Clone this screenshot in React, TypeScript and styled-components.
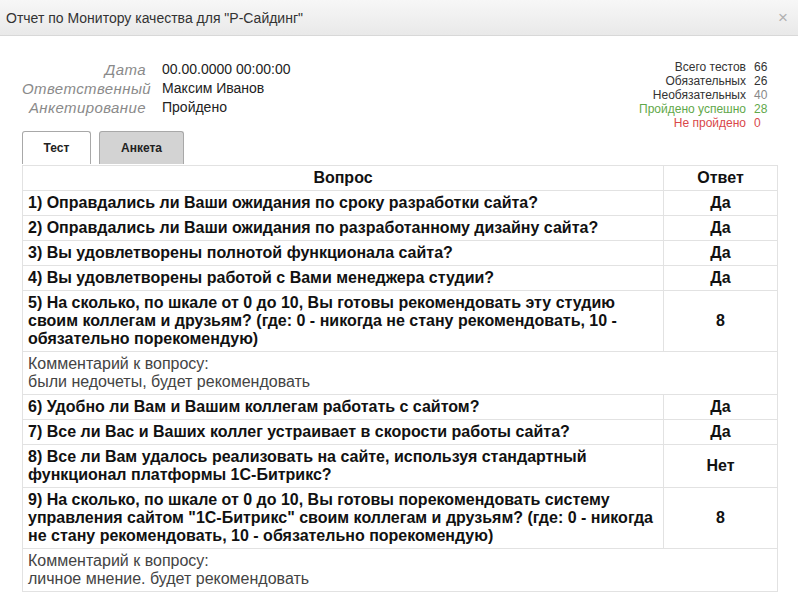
import styled, { createGlobalStyle } from 'styled-components';

const GlobalStyle = createGlobalStyle`
  html, body {
    margin: 0;
    padding: 0;
    background: #fff;
  }
  body {
    font-family: Arial, "Liberation Sans", sans-serif;
    color: #222;
  }
`;

const Window = styled.div`
  width: 798px;
  min-height: 614px;
  background: #fff;
`;

const TitleBar = styled.div`
  height: 35px;
  display: flex;
  align-items: center;
  justify-content: space-between;
  padding: 0 10px 0 6px;
  background: linear-gradient(#f7f7f7, #e9e9e9);
  border-bottom: 1px solid #d8d8d8;
`;

const Title = styled.span`
  font-size: 14px;
  color: #333;
`;

const Close = styled.span`
  font-size: 17px;
  color: #b0b0b0;
  line-height: 1;
`;

const Body = styled.div`
  padding: 24px 20px 20px 22px;
`;

const Summary = styled.div`
  display: flex;
  justify-content: space-between;
  align-items: flex-start;
  margin-bottom: 1px;
`;

const Info = styled.div`
  display: grid;
  grid-template-columns: 124px auto;
  column-gap: 16px;
  line-height: 19px;
`;

const InfoLabel = styled.span`
  text-align: right;
  font-size: 15px;
  letter-spacing: 0.4px;
  font-style: italic;
  color: #8a8a8a;
`;

const InfoValue = styled.span`
  font-size: 14px;
  color: #222;
`;

const Stats = styled.div`
  display: grid;
  grid-template-columns: auto 24px;
  column-gap: 8px;
  font-size: 12px;
  line-height: 14px;
`;

type Tone = 'plain' | 'muted' | 'ok' | 'fail';

const toneColor: Record<Tone, string> = {
  plain: '#333',
  muted: '#888',
  ok: '#5fa84a',
  fail: '#d9474a',
};

const StatLabel = styled.span<{ $tone: Tone }>`
  text-align: right;
  color: ${(p) => (p.$tone === 'muted' ? '#333' : toneColor[p.$tone])};
`;

const StatValue = styled.span<{ $tone: Tone }>`
  color: ${(p) => toneColor[p.$tone]};
`;

const Tabs = styled.div`
  display: flex;
  gap: 8px;
  height: 33px;
  margin-bottom: 1px;
`;

const Tab = styled.div<{ $active?: boolean }>`
  box-sizing: border-box;
  height: 33px;
  width: ${(p) => (p.$active ? '69px' : '85px')};
  display: flex;
  align-items: center;
  justify-content: center;
  font-size: 12px;
  font-weight: bold;
  color: #222;
  border: 1px solid #a8a8a8;
  border-bottom: none;
  border-radius: 3px 3px 0 0;
  background: ${(p) => (p.$active ? '#fff' : '#d3d3d3')};
`;

const Table = styled.table`
  width: 756px;
  border-collapse: collapse;
  font-size: 16px;
  line-height: 18px;
  border: 1px solid #e2e2e2;
`;

const Th = styled.th`
  padding: 3px 5px;
  border: 1px solid #e2e2e2;
  font-weight: bold;
  text-align: center;
  color: #111;
`;

const Question = styled.td`
  padding: 3px 5px;
  border: 1px solid #e2e2e2;
  font-weight: bold;
  color: #111;
  vertical-align: middle;
`;

const Answer = styled.td`
  width: 103px;
  padding: 3px 5px;
  border: 1px solid #e2e2e2;
  font-weight: bold;
  text-align: center;
  vertical-align: middle;
  color: #111;
`;

const Comment = styled.td`
  padding: 3px 5px;
  border: 1px solid #e2e2e2;
  color: #444;
`;

type Row = { q: string; a: string; comment?: string };

const rows: Row[] = [
  { q: '1) Оправдались ли Ваши ожидания по сроку разработки сайта?', a: 'Да' },
  { q: '2) Оправдались ли Ваши ожидания по разработанному дизайну сайта?', a: 'Да' },
  { q: '3) Вы удовлетворены полнотой функционала сайта?', a: 'Да' },
  { q: '4) Вы удовлетворены работой с Вами менеджера студии?', a: 'Да' },
  {
    q: '5) На сколько, по шкале от 0 до 10, Вы готовы рекомендовать эту студию своим коллегам и друзьям? (где: 0 - никогда не стану рекомендовать, 10 - обязательно порекомендую)',
    a: '8',
    comment: 'были недочеты, будет рекомендовать',
  },
  { q: '6) Удобно ли Вам и Вашим коллегам работать с сайтом?', a: 'Да' },
  { q: '7) Все ли Вас и Ваших коллег устраивает в скорости работы сайта?', a: 'Да' },
  {
    q: '8) Все ли Вам удалось реализовать на сайте, используя стандартный функционал платформы 1С-Битрикс?',
    a: 'Нет',
  },
  {
    q: '9) На сколько, по шкале от 0 до 10, Вы готовы порекомендовать систему управления сайтом "1С-Битрикс" своим коллегам и друзьям? (где: 0 - никогда не стану рекомендовать, 10 - обязательно порекомендую)',
    a: '8',
    comment: 'личное мнение. будет рекомендовать',
  },
];

const stats: { label: string; value: string; tone: Tone }[] = [
  { label: 'Всего тестов', value: '66', tone: 'plain' },
  { label: 'Обязательных', value: '26', tone: 'plain' },
  { label: 'Необязательных', value: '40', tone: 'muted' },
  { label: 'Пройдено успешно', value: '28', tone: 'ok' },
  { label: 'Не пройдено', value: '0', tone: 'fail' },
];

const App = () => {
  return (
    <Window>
      <GlobalStyle />
      <TitleBar>
        <Title>Отчет по Монитору качества для "Р-Сайдинг"</Title>
        <Close>×</Close>
      </TitleBar>
      <Body>
        <Summary>
          <Info>
            <InfoLabel>Дата</InfoLabel>
            <InfoValue>00.00.0000 00:00:00</InfoValue>
            <InfoLabel>Ответственный</InfoLabel>
            <InfoValue>Максим Иванов</InfoValue>
            <InfoLabel>Анкетирование</InfoLabel>
            <InfoValue>Пройдено</InfoValue>
          </Info>
          <Stats>
            {stats.map((s) => (
              <>
                <StatLabel key={s.label} $tone={s.tone}>
                  {s.label}
                </StatLabel>
                <StatValue key={s.label + 'v'} $tone={s.tone}>
                  {s.value}
                </StatValue>
              </>
            ))}
          </Stats>
        </Summary>
        <Tabs>
          <Tab $active>Тест</Tab>
          <Tab>Анкета</Tab>
        </Tabs>
        <Table>
          <thead>
            <tr>
              <Th>Вопрос</Th>
              <Th>Ответ</Th>
            </tr>
          </thead>
          <tbody>
            {rows.map((r) => (
              <>
                <tr key={r.q}>
                  <Question>{r.q}</Question>
                  <Answer>{r.a}</Answer>
                </tr>
                {r.comment && (
                  <tr key={r.q + 'c'}>
                    <Comment colSpan={2}>
                      Комментарий к вопросу:
                      <br />
                      {r.comment}
                    </Comment>
                  </tr>
                )}
              </>
            ))}
          </tbody>
        </Table>
      </Body>
    </Window>
  );
};

export default App;
